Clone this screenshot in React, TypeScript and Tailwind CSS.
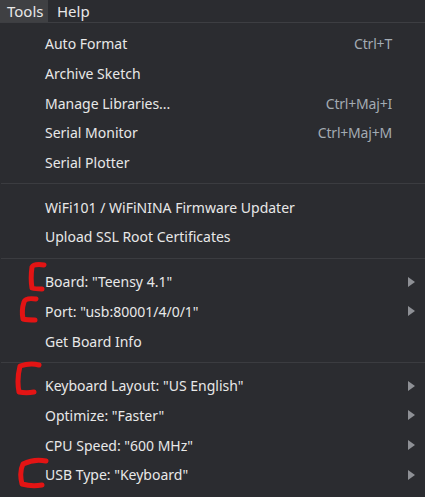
import React from 'react';

type Item = { label: string; shortcut?: string; submenu?: boolean };

const groups: Item[][] = [
  [
    { label: 'Auto Format', shortcut: 'Ctrl+T' },
    { label: 'Archive Sketch' },
    { label: 'Manage Libraries...', shortcut: 'Ctrl+Maj+I' },
    { label: 'Serial Monitor', shortcut: 'Ctrl+Maj+M' },
    { label: 'Serial Plotter' },
  ],
  [
    { label: 'WiFi101 / WiFiNINA Firmware Updater' },
    { label: 'Upload SSL Root Certificates' },
  ],
  [
    { label: 'Board: "Teensy 4.1"', submenu: true },
    { label: 'Port: "usb:80001/4/0/1"', submenu: true },
    { label: 'Get Board Info' },
  ],
  [
    { label: 'Keyboard Layout: "US English"', submenu: true },
    { label: 'Optimize: "Faster"', submenu: true },
    { label: 'CPU Speed: "600 MHz"', submenu: true },
    { label: 'USB Type: "Keyboard"', submenu: true },
  ],
];

const Row = ({ item }: { item: Item }) => (
  <div className="flex items-center h-[29.7px] pl-[45px] pr-[10px]">
    <span className="flex-1 text-[#e8e8e8]">{item.label}</span>
    {item.shortcut && <span className="text-[#a3abb3] mr-[23px] tracking-[-0.2px]">{item.shortcut}</span>}
    {item.submenu && (
      <svg width="7" height="10" viewBox="0 0 7 10">
        <path d="M0 0 L7 5 L0 10 Z" fill="#8e9095" />
      </svg>
    )}
  </div>
);

// red hand-drawn brackets lying over the menu
const Mark = ({ d, x, y, w, h }: { d: string; x: number; y: number; w: number; h: number }) => (
  <svg
    className="absolute pointer-events-none"
    style={{ left: x, top: y }}
    width={w}
    height={h}
    viewBox={`0 0 ${w} ${h}`}
  >
    <path d={d} fill="none" stroke="#e31414" strokeWidth="5" strokeLinecap="round" strokeLinejoin="round" />
  </svg>
);

export default function App() {
  return (
    <div
      className="relative w-[425px] h-[497px] bg-[#2b2c30] overflow-hidden text-[14px]"
      style={{ fontFamily: '"Noto Sans", sans-serif' }}
    >
      <div className="flex h-[23px] border-b border-[#3d3e42] text-[15px] text-[#e8e8e8]">
        <div className="px-[7px] w-[48px] bg-[#3f4043] leading-[22px]">Tools</div>
        <div className="px-[9px] leading-[22px]">Help</div>
      </div>
      <div className="pt-[6px]">
        {groups.map((g, i) => (
          <div key={i}>
            {g.map((it) => (
              <Row key={it.label} item={it} />
            ))}
            <div className={`ml-[1px] mt-[6px] h-px bg-[#3b3c40] ${i === 3 ? 'mt-[8px]' : 'mb-[8px]'}`} />
          </div>
        ))}
      </div>

      <Mark x={25} y={260} w={22} h={34} d="M19 5 C12 4 8 5 7 7 C6 14 6 22 7 28 C10 29 14 29 17 29" />
      <Mark x={17} y={294} w={24} h={30} d="M19 5 C12 4 8 5 7 8 C5 14 5 20 6 25 C10 26 14 26 18 26" />
      <Mark x={12} y={360} w={32} h={38} d="M27 5 C20 3 14 4 8 6 C6 14 5 22 7 32 C12 33 17 33 22 32" />
      <Mark x={15} y={456} w={36} h={34} d="M31 5 C22 3 14 5 8 8 C5 14 5 20 7 28 C14 30 21 30 27 29" />
    </div>
  );
}
